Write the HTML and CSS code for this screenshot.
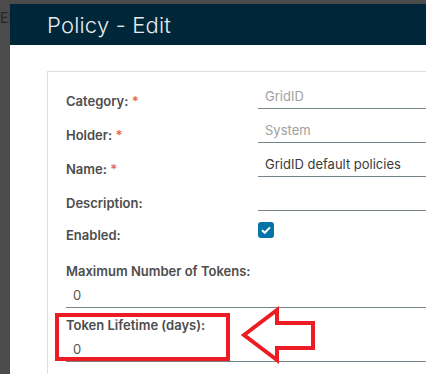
FILE: index.html
```html
<!DOCTYPE html>
<html lang="en">
<head>
  <meta charset="UTF-8">
  <title>Policy - Edit</title>
  <link rel="stylesheet" href="styles.css">
</head>
<body>
<span class="behind-text">ES</span>
<div class="modal">
  <div class="modal-header">
    <h1>Policy - Edit</h1>
  </div>
  <div class="modal-body">
    <div class="card">
      <div class="form-grid">
        <label>Category: <span class="req">*</span></label>
        <div class="field disabled">GridID</div>
        <label>Holder: <span class="req">*</span></label>
        <div class="field disabled">System</div>
        <label>Name: <span class="req">*</span></label>
        <div class="field">GridID default policies</div>
        <label>Description:</label>
        <div class="field"></div>
        <label class="enabled-label">Enabled:</label>
        <div class="check-cell">
          <span class="checkbox">
            <svg width="10" height="8" viewBox="0 0 10 8"><path d="M1 4.2 L3.8 6.8 L9 1.4" fill="none" stroke="#fff" stroke-width="2"/></svg>
          </span>
        </div>
      </div>
      <div class="stacked">
        <label>Maximum Number of Tokens:</label>
        <div class="field wide">0</div>
        <label class="second">Token Lifetime (days):</label>
        <div class="field wide">0</div>
      </div>
    </div>
  </div>
</div>
<svg class="annotation" width="426" height="374" viewBox="0 0 426 374">
  <rect x="57" y="315" width="171" height="44" fill="none" stroke="#ed1c24" stroke-width="4"/>
  <polygon points="244,335 277,310 277,323 313,323 313,348 277,348 277,360" fill="none" stroke="#ed1c24" stroke-width="4" stroke-linejoin="miter"/>
</svg>
</body>
</html>
```

FILE: styles.css
```css
body {
  margin: 0;
  background: #4b4b4b;
  overflow: hidden;
  height: 374px;
  font-family: Inter, "Open Sans", sans-serif;
  position: relative;
}
.behind-text {
  position: absolute;
  top: 9px;
  left: 0;
  font-size: 14px;
  color: #262626;
}
.modal {
  margin: 4px 0 0 10px;
  width: calc(100% - 10px);
  height: 370px;
  background: #fff;
  position: relative;
}
.modal-header {
  background: #00263a;
  height: 41px;
  padding-left: 37px;
  display: flex;
  align-items: center;
}
.modal-header h1 {
  margin: 0;
  font-size: 22px;
  font-weight: 300;
  color: #e6ebee;
  letter-spacing: 0.2px;
}
.modal-body {
  padding: 26px 0 0 37px;
}
.card {
  border-left: 1px solid #dedede;
  border-top: 1px solid #dedede;
  padding: 12px 0 0 18px;
  height: 300px;
}
label {
  font-size: 13px;
  line-height: 16px;
  font-weight: 600;
  color: #4d4d4d;
}
.req {
  color: #e8625a;
}
.form-grid {
  display: grid;
  grid-template-columns: 192px 1fr;
  grid-auto-rows: 25px;
  row-gap: 9px;
  align-items: end;
}
.field {
  height: 24px;
  line-height: 24px;
  border-bottom: 1px solid #75828a;
  padding-left: 7px;
  font-size: 13px;
  color: #3a3a3a;
}
.field.disabled {
  color: #a0a0a0;
}
.enabled-label {
  margin-bottom: 2px;
}
.check-cell {
  align-self: start;
  padding-top: 2px;
}
.checkbox {
  width: 16px;
  height: 16px;
  border-radius: 3px;
  background: #0474a8;
  display: flex;
  align-items: center;
  justify-content: center;
}
.stacked {
  margin-top: 18px;
  display: flex;
  flex-direction: column;
}
.field.wide {
  color: #555;
}
.stacked .second {
  margin-top: 9px;
}
.stacked .field {
  margin-top: 4px;
}
.annotation {
  position: absolute;
  top: 0;
  left: 0;
}
```
